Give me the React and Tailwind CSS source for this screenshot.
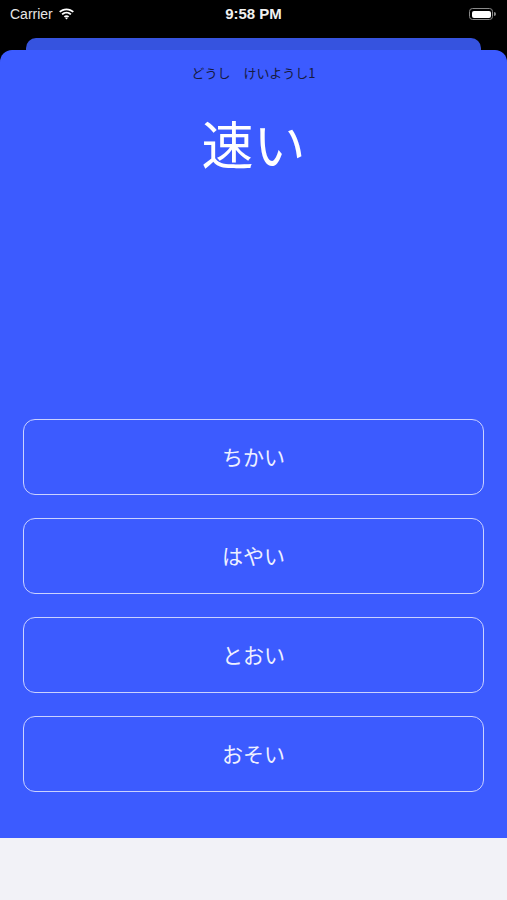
import React from "react";

const jp = { fontFamily: '"Noto Sans CJK JP", "Noto Sans", sans-serif' };

function Wifi() {
  return (
    <svg width="17" height="12" viewBox="0 0 17 12" className="ml-[5px]">
      <path d="M8.5 2.2c2.4 0 4.6.9 6.2 2.4l1.2-1.3C14 1.5 11.4.4 8.5.4S3 1.5 1.1 3.3l1.2 1.3C3.9 3.1 6.1 2.2 8.5 2.2z" fill="#fff" />
      <path d="M8.5 5.6c1.5 0 2.8.6 3.8 1.5l1.2-1.3C12.2 4.6 10.4 3.8 8.5 3.8S4.8 4.6 3.5 5.8l1.2 1.3c1-.9 2.3-1.5 3.8-1.5z" fill="#fff" />
      <path d="M8.5 9c.6 0 1.1.2 1.5.6l1.2-1.3c-.7-.7-1.7-1.1-2.7-1.1s-2 .4-2.7 1.1L7 9.6c.4-.4.9-.6 1.5-.6z M8.5 11.6 L9.9 10.1 C9.5 9.8 9 9.6 8.5 9.6 S7.5 9.8 7.1 10.1z" fill="#fff" />
    </svg>
  );
}

function Battery() {
  return (
    <div className="flex items-center">
      <div className="w-[24px] h-[12px] rounded-[3.5px] border border-[#8a8a8a] p-[1.5px]">
        <div className="w-full h-full rounded-[2px] bg-white" />
      </div>
      <div className="w-[1.5px] h-[4px] rounded-r-sm bg-[#8a8a8a] ml-[1px]" />
    </div>
  );
}

const options = ["ちかい", "はやい", "とおい", "おそい"];

export default function App() {
  return (
    <div className="w-[507px] h-[900px] flex flex-col bg-black overflow-hidden">
      <div
        className="h-[38px] flex items-start justify-between px-[10px] pt-[5px] text-white"
        style={{ fontFamily: '"Liberation Sans", Arial, sans-serif' }}
      >
        <div className="flex items-center w-[120px] text-[14px] text-[#e6e6e6] leading-[18px]">
          Carrier
          <Wifi />
        </div>
        <div className="text-[15px] font-bold leading-[18px] text-[#f0f0f0]">9:58 PM</div>
        <div className="w-[120px] flex justify-end pt-[3px] pr-[1px]">
          <Battery />
        </div>
      </div>
      <div className="mx-[26px] h-[12px] rounded-t-[10px] bg-[#3653df]" />
      <div className="h-[788px] rounded-t-[12px] bg-[#3c5bff] flex flex-col items-center" style={jp}>
        <div className="pt-[14px] text-[13px] leading-[18px] text-[#161a40]">どうし　けいようし1</div>
        <div
          className="mt-[35px] text-[52px] leading-[52px] text-white"
          style={{ fontFamily: '"Noto Sans CJK JP", serif' }}
        >
          速い
        </div>
        <div className="mt-auto w-full px-[23px] pb-[46px] flex flex-col gap-[23px]">
          {options.map((o) => (
            <div
              key={o}
              className="h-[76px] rounded-[12px] border-[1.5px] border-[#cbd2ff] flex items-center justify-center text-[21px] text-[#eef0ff]"
            >
              {o}
            </div>
          ))}
        </div>
      </div>
      <div className="flex-1 bg-[#f2f2f7]" />
    </div>
  );
}
